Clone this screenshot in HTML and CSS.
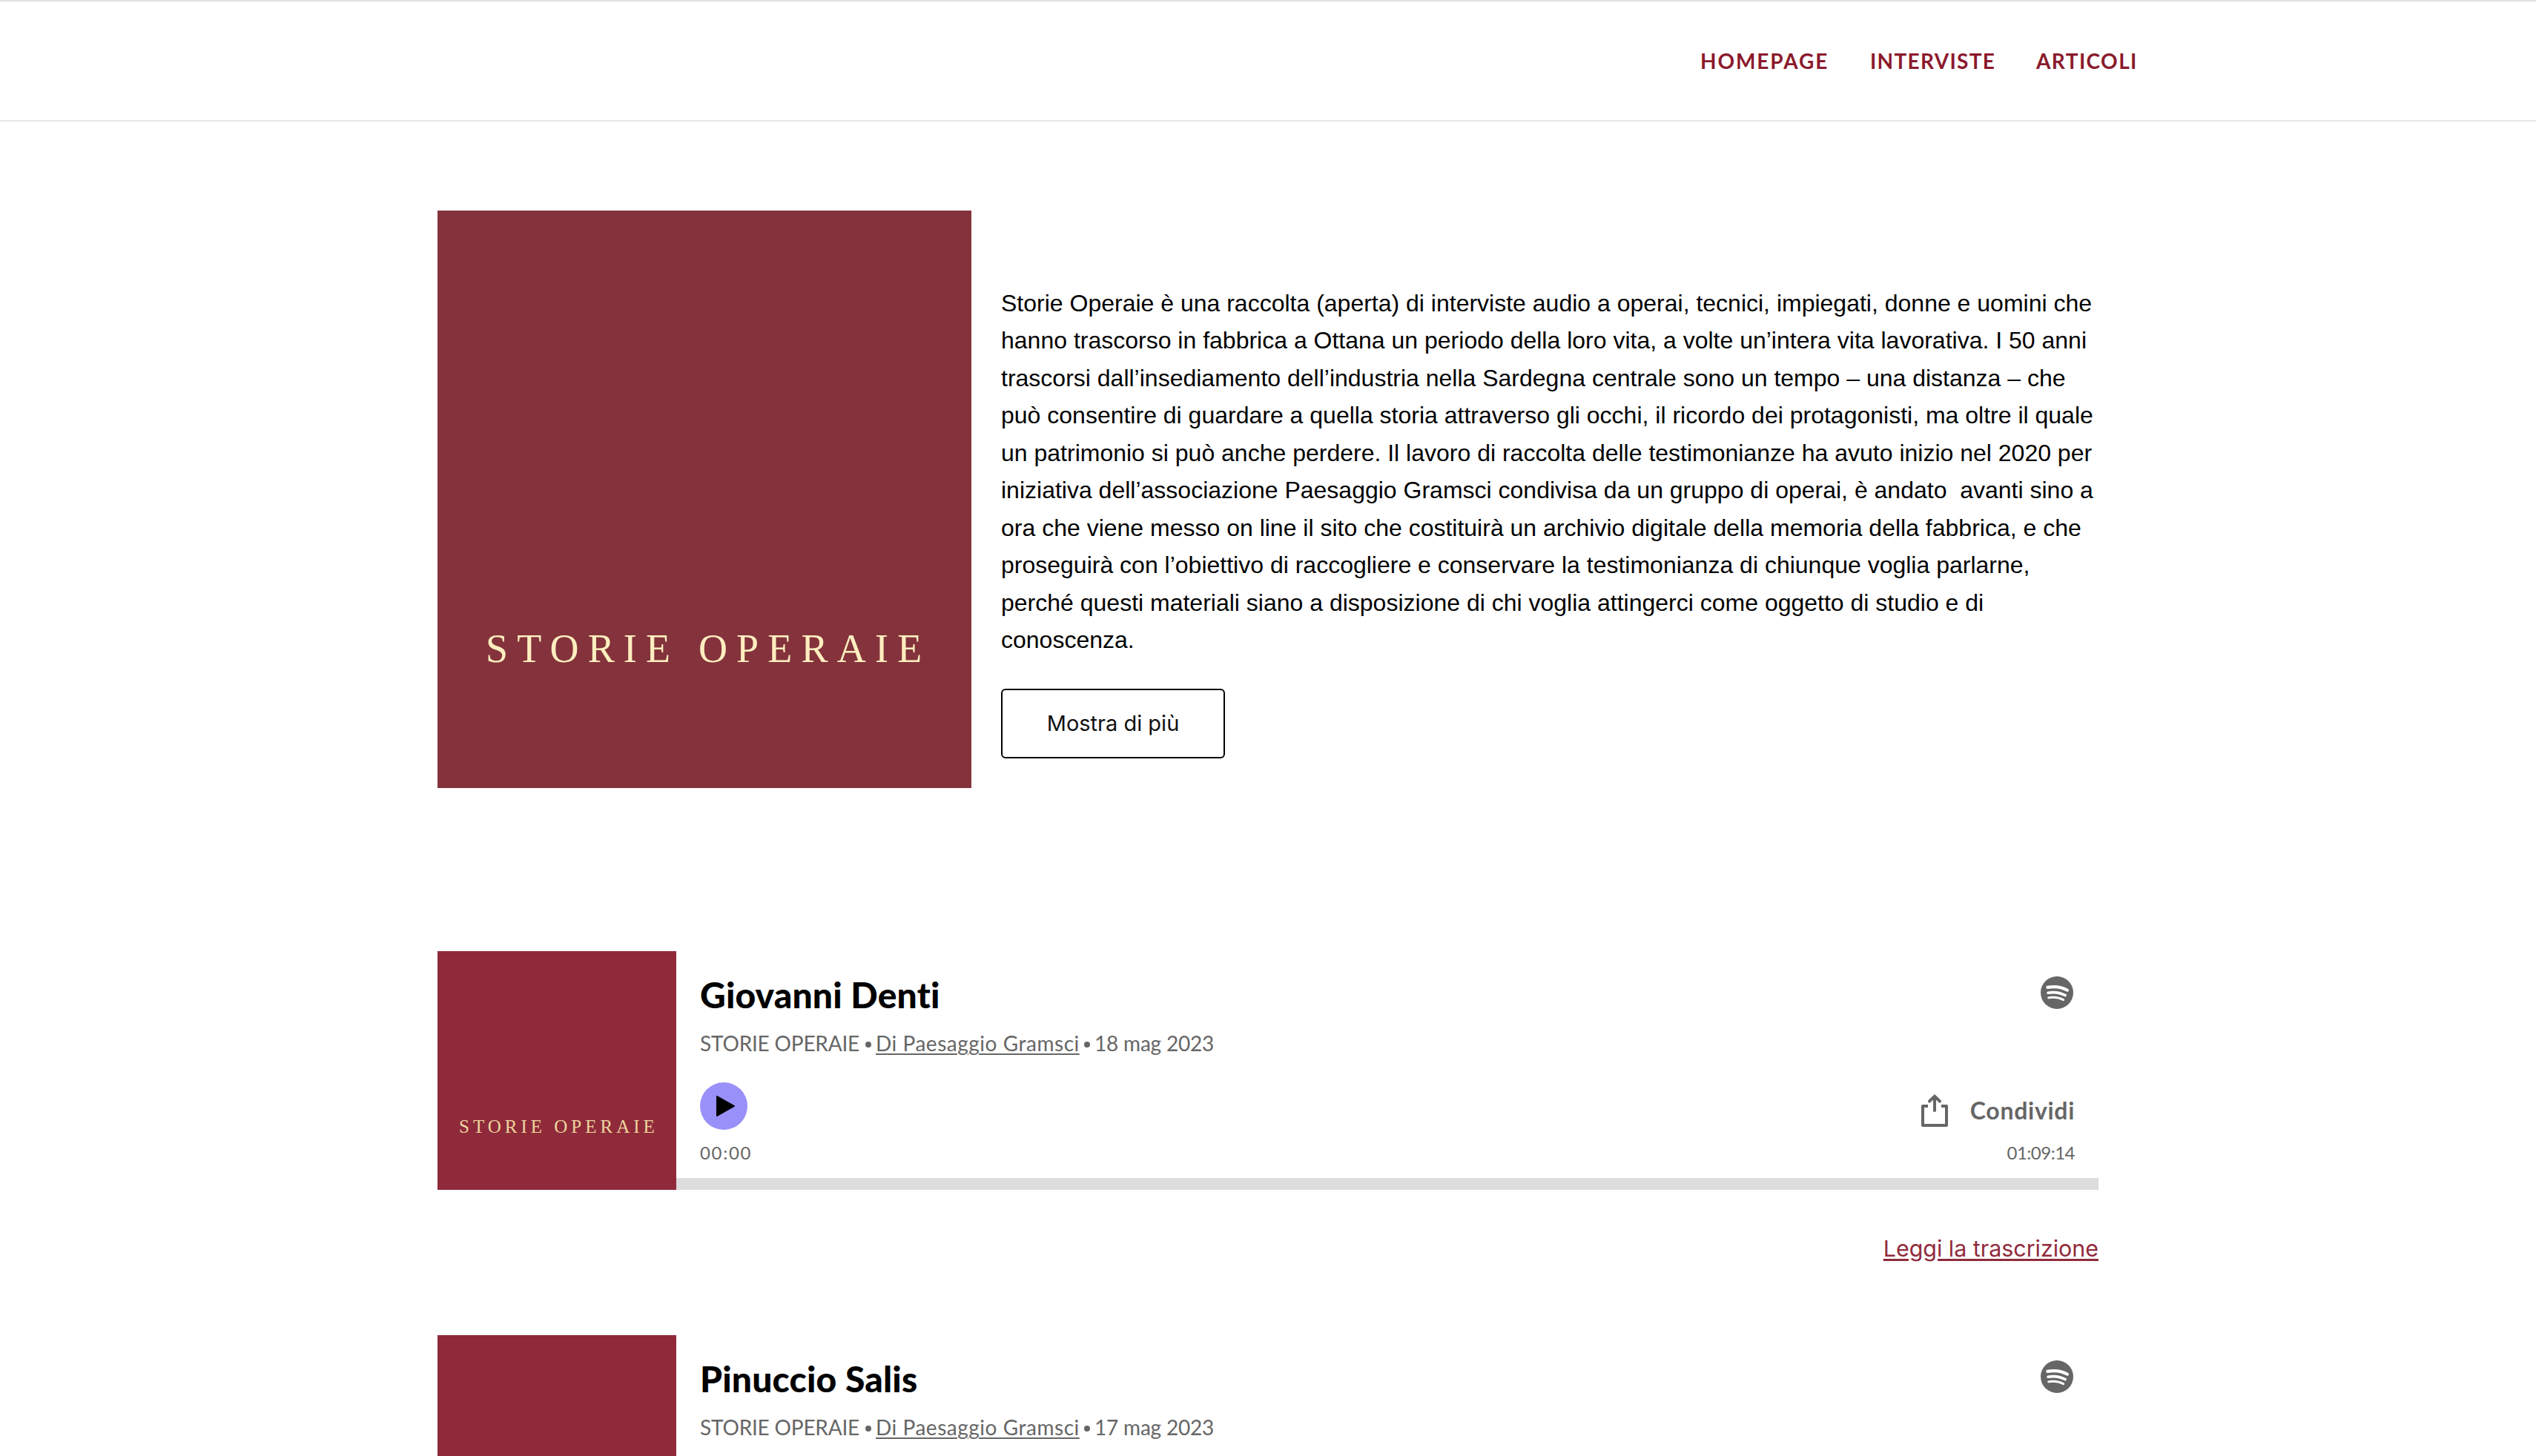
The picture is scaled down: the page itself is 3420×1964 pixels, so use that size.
FILE: index.html
```html
<!DOCTYPE html>
<html lang="it">
<head>
<meta charset="utf-8">
<title>Storie Operaie</title>
<link rel="stylesheet" href="styles.css">
</head>
<body>
<svg class="sprite" aria-hidden="true">
  <symbol id="spotify" viewBox="0 0 44 44">
    <circle cx="22" cy="22" r="22" fill="#666"/>
    <g fill="none" stroke="#fff" stroke-linecap="round">
      <path d="M9.3 14.9C18 13.2 28 14.2 36 18.8" stroke-width="4.2"/>
      <path d="M10 22.2C18 20.8 26 21.8 33.2 25.6" stroke-width="3.6"/>
      <path d="M10.6 28.8C17.5 27.6 24.5 28.4 30.8 31.7" stroke-width="2.8"/>
    </g>
  </symbol>
  <symbol id="share" viewBox="0 0 36 44">
    <g fill="none" stroke="#666" stroke-width="4">
      <path d="M9 16H2V42H34V16H27" stroke-linejoin="round"/>
      <path d="M18 3V22M11 9.5L18 2.8L25 9.5" stroke-linecap="round"/>
    </g>
  </symbol>
  <symbol id="play" viewBox="0 0 64 64">
    <circle cx="32" cy="32" r="32" fill="#9990f9"/>
    <path d="M23 19L46 32L23 45Z" stroke="#000" stroke-width="2" stroke-linejoin="round"/>
  </symbol>
</svg>

<header class="header">
  <nav class="nav">
    <a class="nav-home">HOMEPAGE</a>
    <a class="nav-interviews">INTERVISTE</a>
    <a class="nav-articles">ARTICOLI</a>
  </nav>
</header>

<main class="main">
  <section class="hero">
    <div class="hero-cover"><span>STORIE OPERAIE</span></div>
    <div class="hero-body">
      <p class="intro">Storie Operaie è una raccolta (aperta) di interviste audio a operai, tecnici, impiegati, donne e uomini che<br>
hanno trascorso in fabbrica a Ottana un periodo della loro vita, a volte un’intera vita lavorativa. I 50 anni<br>
trascorsi dall’insediamento dell’industria nella Sardegna centrale sono un tempo – una distanza – che<br>
può consentire di guardare a quella storia attraverso gli occhi, il ricordo dei protagonisti, ma oltre il quale<br>
un patrimonio si può anche perdere. Il lavoro di raccolta delle testimonianze ha avuto inizio nel 2020 per<br>
iniziativa dell’associazione Paesaggio Gramsci condivisa da un gruppo di operai, è andato&nbsp; avanti sino a<br>
ora che viene messo on line il sito che costituirà un archivio digitale della memoria della fabbrica, e che<br>
proseguirà con l’obiettivo di raccogliere e conservare la testimonianza di chiunque voglia parlarne,<br>
perché questi materiali siano a disposizione di chi voglia attingerci come oggetto di studio e di<br>
conoscenza.</p>
      <button class="more">Mostra di più</button>
    </div>
  </section>

  <article class="episode">
    <div class="player">
      <div class="cover"><span>STORIE OPERAIE</span></div>
      <div class="panel">
        <div class="info">
          <div>
            <h2 class="title">Giovanni Denti</h2>
            <p class="meta"><span class="show">STORIE OPERAIE</span><i class="dot"></i><a class="author">Di Paesaggio Gramsci</a><i class="dot"></i><span class="date">18 mag 2023</span></p>
          </div>
          <svg class="spotify"><use href="#spotify"/></svg>
        </div>
        <div class="controls">
          <svg class="play"><use href="#play"/></svg>
          <div class="share"><svg class="share-icon"><use href="#share"/></svg><span>Condividi</span></div>
        </div>
        <div class="times"><span class="elapsed">00:00</span><span class="total">01:09:14</span></div>
        <div class="progress"></div>
      </div>
    </div>
    <a class="transcript">Leggi la trascrizione</a>
  </article>

  <article class="episode">
    <div class="player player-last">
      <div class="cover"></div>
      <div class="panel">
        <div class="info">
          <div>
            <h2 class="title">Pinuccio Salis</h2>
            <p class="meta"><span class="show">STORIE OPERAIE</span><i class="dot"></i><a class="author">Di Paesaggio Gramsci</a><i class="dot"></i><span class="date">17 mag 2023</span></p>
          </div>
          <svg class="spotify"><use href="#spotify"/></svg>
        </div>
      </div>
    </div>
  </article>
</main>
</body>
</html>
```
FILE: styles.css
```css
* { box-sizing: border-box; }
html, body { margin: 0; background: #fff; }
body { font-family: "Liberation Sans", Arial, sans-serif; color: #000; }
h2, p { margin: 0; }
svg { display: block; flex: none; }
.sprite { display: none; }

.header {
  height: 164px;
  border-top: 2px solid #e1e1e1;
  border-bottom: 2px solid #e8e8e8;
  display: flex;
  align-items: center;
  justify-content: flex-end;
  padding: 0 536px 1px 0;
}
.nav { display: flex; }
.nav a {
  font: 700 28px/36px Lato, sans-serif;
  color: #8b1a2d;
  white-space: nowrap;
}
.nav-home { width: 229px; letter-spacing: 1.9px; }
.nav-interviews { width: 224px; letter-spacing: 1.3px; }
.nav-articles { width: 138px; letter-spacing: 1.4px; }

.main { width: 2240px; margin: 0 auto; padding-top: 120px; }

.hero { display: flex; gap: 40px; height: 779px; margin-bottom: 220px; }
.hero-cover {
  width: 720px;
  flex: none;
  background: #84333c;
  display: flex;
  align-items: flex-end;
  padding: 0 0 158px 65px;
}
.hero-cover span {
  font: 54px/60px "Liberation Serif", serif;
  letter-spacing: 12.2px;
  color: #fdeebf;
  white-space: nowrap;
}
.hero-body { padding-top: 99.5px; }
.intro { font-size: 32px; line-height: 50.5px; white-space: nowrap; }
.more {
  display: block;
  width: 302px;
  height: 94px;
  margin-top: 40.5px;
  padding: 0;
  background: #fff;
  border: 2px solid #000;
  border-radius: 6px;
  font: 29px/40px Inter, sans-serif;
  color: #111;
}

.player { display: flex; height: 322px; }
.player-last { height: 163px; }
.cover {
  width: 322px;
  flex: none;
  background: #8f2a3a;
  display: flex;
  align-items: flex-end;
  padding: 0 0 70px 29px;
}
.cover span {
  font: 25px/30px "Liberation Serif", serif;
  letter-spacing: 5px;
  color: #ecd69f;
  white-space: nowrap;
}
.panel {
  flex: 1;
  display: flex;
  flex-direction: column;
  font-family: Lato, sans-serif;
  font-variant-ligatures: none;
}
.info { display: flex; justify-content: space-between; height: 177px; padding: 31px 34px 0 32px; }
.player-last .info { height: 163px; }
.title { font-size: 48px; line-height: 56px; font-weight: 900; letter-spacing: .15px; white-space: nowrap; }
.meta {
  display: flex;
  align-items: center;
  margin-top: 20px;
  font-size: 28px;
  line-height: 34px;
  color: #666;
  white-space: nowrap;
}
.show { width: 223px; letter-spacing: -.2px; }
.author {
  width: 275px;
  letter-spacing: .53px;
  text-decoration: underline;
  text-decoration-thickness: 2px;
  text-underline-offset: 3px;
}
.date { letter-spacing: -.2px; }
.dot { width: 8px; height: 8px; border-radius: 50%; background: #666; margin-top: 3px; }
.show + .dot { margin-right: 6px; }
.author + .dot { margin: 3px 6px 0; }
.spotify { width: 44px; height: 44px; margin-top: 3px; }
.controls { display: flex; justify-content: space-between; align-items: flex-end; height: 64px; padding: 0 32px; }
.play { width: 64px; height: 64px; }
.share {
  display: flex;
  align-items: center;
  gap: 30px;
  margin-bottom: 4px;
  font-size: 32px;
  line-height: 44px;
  font-weight: 700;
  letter-spacing: .7px;
  color: #666;
}
.share-icon { width: 36px; height: 44px; }
.times {
  display: flex;
  justify-content: space-between;
  margin-top: 16px;
  padding: 0 32px;
  font-size: 24px;
  line-height: 30px;
  color: #666;
}
.elapsed { letter-spacing: 1.7px; }
.total { letter-spacing: -.5px; }
.progress { height: 16px; margin-top: auto; background: #ddd; }
.transcript {
  display: block;
  margin: 54px 0 92px;
  text-align: right;
  font: 30.4px/50px Inter, sans-serif;
  color: #902b3c;
  text-decoration: underline;
  text-decoration-thickness: 3px;
  text-underline-offset: 3px;
}
```
